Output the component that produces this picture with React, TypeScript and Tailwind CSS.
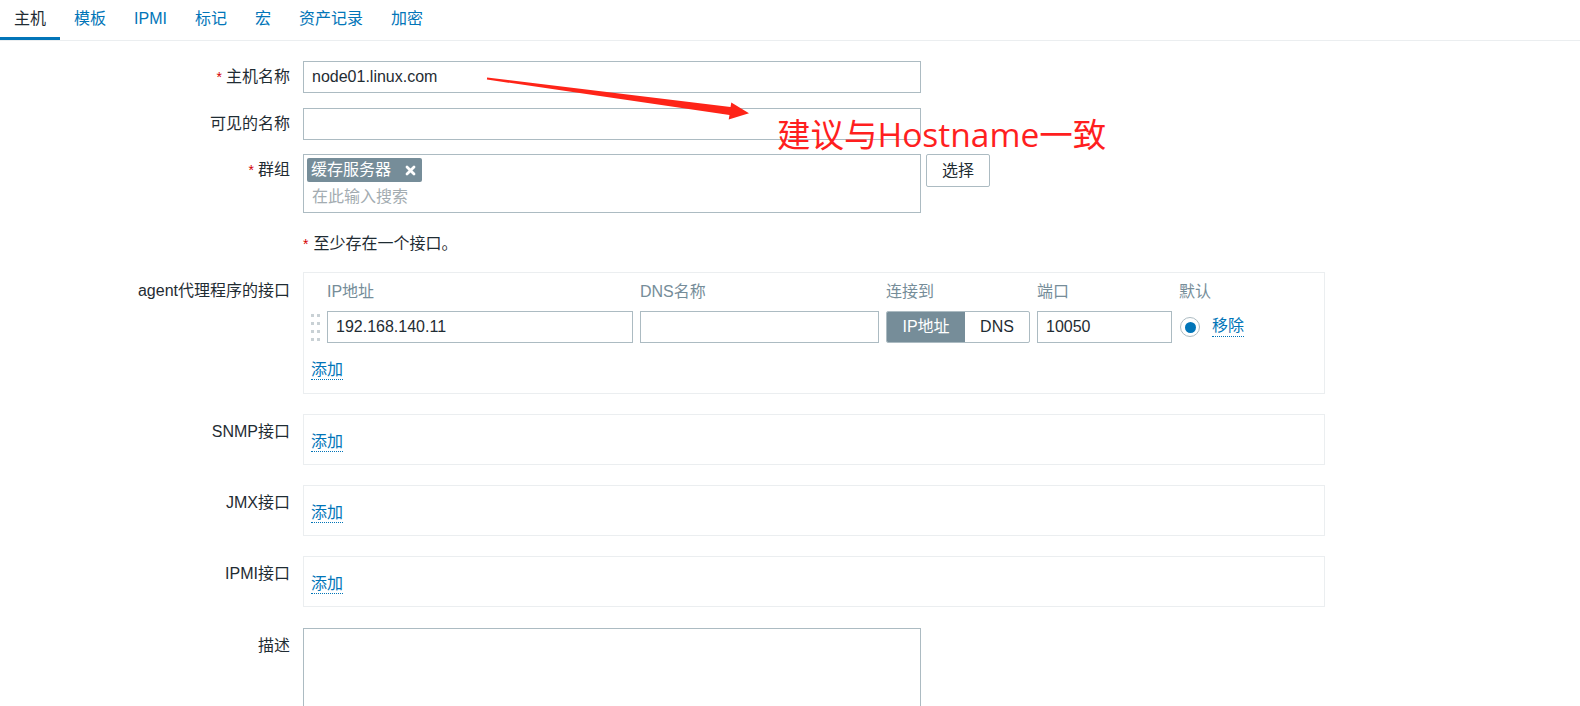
import React from "react";

const tabs = ["主机", "模板", "IPMI", "标记", "宏", "资产记录", "加密"];

const inputCls = "h-8 border border-[#acbbc2] bg-white pl-[8px] flex items-center";

function Req() {
  return <span className="text-[#d40000] mr-[4px] text-[14px] align-top">*</span>;
}

function AddLink({ label = "添加" }: { label?: string }) {
  return (
    <span className="text-[#0275b8] leading-[18px] border-b border-dotted border-[#0275b8] pb-[1px]">
      {label}
    </span>
  );
}

function Row({
  label,
  req,
  className = "",
  labelCls = "",
  children,
}: {
  label: string;
  req?: boolean;
  className?: string;
  labelCls?: string;
  children: React.ReactNode;
}) {
  return (
    <div className={`flex gap-[13px] ${className}`}>
      <div className={`w-[290px] shrink-0 text-right leading-[32px] ${labelCls}`}>
        {req && <Req />}
        {label}
      </div>
      <div className="flex items-start">{children}</div>
    </div>
  );
}

function DragHandle() {
  return (
    <svg width="9" height="27" viewBox="0 0 9 27">
      {[0, 8, 16, 24].map((y) =>
        [0, 6].map((x) => (
          <rect key={`${x}-${y}`} x={x} y={y} width="3" height="3" fill="#c9d1d5" />
        ))
      )}
    </svg>
  );
}

function EmptyBox() {
  return (
    <div className="w-[1022px] h-[51px] border border-[#ebeef0] pt-[15px] px-[7px]">
      <AddLink />
    </div>
  );
}

export default function App() {
  return (
    <div className="relative min-h-screen bg-white text-[#1f2c33] text-[16px] font-['Liberation_Sans','Noto_Sans_CJK_SC',sans-serif]">
      {/* tabs */}
      <nav className="flex h-[41px] border-b border-[#ebeef0]">
        {tabs.map((t, i) => (
          <div
            key={t}
            className={
              i === 0
                ? "px-[14px] flex items-center border-b-[3px] border-[#0275b8] text-[#1f2c33]"
                : "px-[14px] flex items-center border-b-[3px] border-transparent text-[#0275b8]"
            }
          >
            {t}
          </div>
        ))}
      </nav>

      <div className="pt-[20px]">
        <Row label="主机名称" req>
          <div className={`${inputCls} w-[618px]`}>node01.linux.com</div>
        </Row>

        <Row label="可见的名称" className="mt-[15px]">
          <div className={`${inputCls} w-[618px]`}></div>
        </Row>

        <Row label="群组" req className="mt-[14px]">
          <div className="w-[618px] h-[59px] border border-[#acbbc2] p-[3px]">
            <span className="inline-flex items-center h-6 bg-[#768d99] text-white rounded-[2px] pl-[4px] pr-[6px] gap-[14px]">
              缓存服务器
              <svg width="11" height="11" viewBox="0 0 11 11">
                <path d="M2 2 L9 9 M9 2 L2 9" stroke="white" strokeWidth="2.8" strokeLinecap="round" />
              </svg>
            </span>
            <div className="mt-[3px] pl-[5px] leading-[24px] text-[#a3acb1]">在此输入搜索</div>
          </div>
          <div className="ml-[5px] w-[64px] h-[33px] border border-[#acbbc2] rounded-[2px] flex items-center justify-center">
            选择
          </div>
        </Row>

        <div className="mt-[21px] pl-[303px] leading-[20px]">
          <span className="text-[#d40000] mr-[5px] text-[14px] align-top">*</span>
          至少存在一个接口。
        </div>

        <Row label="agent代理程序的接口" className="mt-[18px]" labelCls="pt-[3px]">
          <div className="w-[1022px] border border-[#ebeef0] pt-[10px] px-[7px] pb-[14px]">
            <div className="grid grid-cols-[9px_306px_239px_144px_135px_auto] gap-x-[7px] gap-y-[10px] items-center">
              <div></div>
              <div className="leading-[18px] text-[#768d99]">IP地址</div>
              <div className="leading-[18px] text-[#768d99]">DNS名称</div>
              <div className="leading-[18px] text-[#768d99]">连接到</div>
              <div className="leading-[18px] text-[#768d99]">端口</div>
              <div className="leading-[18px] text-[#768d99]">默认</div>

              <div className="flex items-center">
                <DragHandle />
              </div>
              <div className={inputCls}>192.168.140.11</div>
              <div className={inputCls}></div>
              <div className="h-8 flex border border-[#acbbc2] rounded-[2px] overflow-hidden">
                <div className="w-[78px] bg-[#768d99] text-white flex items-center justify-center">IP地址</div>
                <div className="flex-1 flex items-center justify-center">DNS</div>
              </div>
              <div className={inputCls}>10050</div>
              <div className="flex items-center gap-[12px] pl-[1px]">
                <div className="w-5 h-5 rounded-full border border-[#acbbc2] flex items-center justify-center">
                  <div className="w-[11px] h-[11px] rounded-full bg-[#0275b8]"></div>
                </div>
                <AddLink label="移除" />
              </div>
            </div>
            <div className="mt-[18px] leading-[18px]">
              <AddLink />
            </div>
          </div>
        </Row>

        <Row label="SNMP接口" className="mt-[20px]" labelCls="pt-[2px]">
          <EmptyBox />
        </Row>
        <Row label="JMX接口" className="mt-[20px]" labelCls="pt-[2px]">
          <EmptyBox />
        </Row>
        <Row label="IPMI接口" className="mt-[20px]" labelCls="pt-[2px]">
          <EmptyBox />
        </Row>

        <Row label="描述" className="mt-[21px]" labelCls="pt-[2px]">
          <div className="w-[618px] h-[110px] border border-[#acbbc2]"></div>
        </Row>
      </div>

      {/* annotation overlay */}
      <svg className="absolute left-0 top-0 pointer-events-none" width="1580" height="200">
        <polygon
          points="487.1,77.5 730.5,107 731.3,102.4 749,113.2 728.7,119.6 729.5,115 486.9,79.5"
          fill="#fe2418"
        />
      </svg>
      <div className="absolute left-[777px] top-[117px] text-[33.5px] leading-[34px] text-[#ff1f1f] whitespace-nowrap font-['Open_Sans','Noto_Sans_CJK_SC',sans-serif]">
        建议与Hostname一致
      </div>
    </div>
  );
}
